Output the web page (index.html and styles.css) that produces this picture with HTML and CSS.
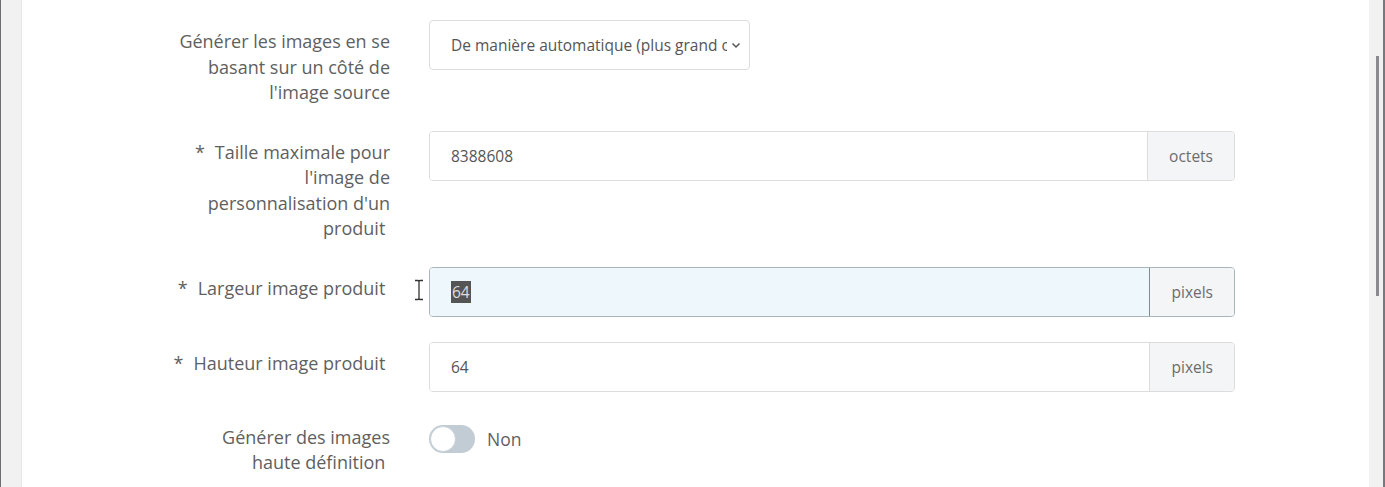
FILE: index.html
```html
<!DOCTYPE html>
<html lang="fr">
<head>
<meta charset="utf-8">
<link rel="stylesheet" href="styles.css">
</head>
<body>
<div class="frame">
  <div class="edge-left"></div>
  <main class="content">
    <div class="row row-1">
      <label class="label">Générer les images en se basant sur un côté de l'image source</label>
      <div class="control">
        <div class="select">
          <span class="select-text">De manière automatique (plus grand côté)</span>
          <svg class="chev" width="10" height="7" viewBox="0 0 10 7"><path d="M1.5 1.5 L5 5 L8.5 1.5" fill="none" stroke="#555" stroke-width="1.5"/></svg>
        </div>
      </div>
    </div>
    <div class="row row-2">
      <label class="label"><span class="req">*</span>Taille maximale pour l'image de personnalisation d'un produit&nbsp;</label>
      <div class="control">
        <div class="group">
          <div class="input">8388608</div>
          <div class="addon">octets</div>
        </div>
      </div>
    </div>
    <div class="row row-3">
      <label class="label label-wide"><span class="req">*</span>Largeur image produit&nbsp;</label>
      <div class="control">
        <svg class="ibeam" width="10" height="22" viewBox="0 0 10 22"><path d="M1 1.5 H4 M6 1.5 H9 M5 2 V20 M1 20.5 H4 M6 20.5 H9" fill="none" stroke="#333" stroke-width="1.3"/><path d="M4 1.5 Q5 1.5 5 2.5 Q5 1.5 6 1.5 M4 20.5 Q5 20.5 5 19.5 Q5 20.5 6 20.5" fill="none" stroke="#333" stroke-width="1.3"/></svg>
        <div class="group focused">
          <div class="input"><span class="sel">64</span></div>
          <div class="addon">pixels</div>
        </div>
      </div>
    </div>
    <div class="row row-4">
      <label class="label label-wide"><span class="req">*</span>Hauteur image produit&nbsp;</label>
      <div class="control">
        <div class="group">
          <div class="input">64</div>
          <div class="addon">pixels</div>
        </div>
      </div>
    </div>
    <div class="row row-5">
      <label class="label">Générer des images haute définition&nbsp;</label>
      <div class="control switch-line">
        <span class="switch"><span class="knob"></span></span>
        <span class="switch-text">Non</span>
      </div>
    </div>
  </main>
  <div class="edge-right"><div class="thumb"></div></div>
</div>
</body>
</html>
```
FILE: styles.css
```css
html, body {
  margin: 0;
  padding: 0;
  height: 100%;
  overflow: hidden;
  background: #fff;
}
body {
  font-family: "Open Sans", "Noto Sans", sans-serif;
  color: #5f5f5f;
}
.frame {
  display: flex;
  height: 487px;
}
.edge-left {
  width: 21px;
  border-left: 1px solid #6e6e73;
  background: #f1f1f2;
  box-shadow: inset -1px 0 0 #e6e7ea;
}
.content {
  flex: 1;
  padding-top: 20px;
  padding-left: 153px;
  display: flex;
  flex-direction: column;
  gap: 25px;
}
.edge-right {
  width: 14px;
  border-right: 2px solid #77777c;
  background: #f1f1f2;
  position: relative;
}
.thumb {
  position: absolute;
  left: 7px;
  top: 56px;
  width: 3px;
  height: 240px;
  background: #8a8a8f;
}
.row {
  display: grid;
  grid-template-columns: 215px 806px;
  column-gap: 39px;
  align-items: start;
}
.label {
  text-align: right;
  font-size: 18px;
  line-height: 25.5px;
  padding-top: 9px;
  color: #5f5f5f;
}
.label-wide {
  margin-left: -12px;
}
.req {
  margin-right: 10px;
}
.control {
  position: relative;
}
.select {
  width: 321px;
  height: 50px;
  box-sizing: border-box;
  border: 1px solid #dcdcdc;
  border-radius: 4px;
  display: flex;
  align-items: center;
  padding: 0 8px 0 21px;
  font-size: 15.5px;
  color: #555;
  background: #fff;
}
.select-text {
  flex: 1;
  white-space: nowrap;
  overflow: hidden;
  margin-right: 4px;
}
.chev {
  flex: none;
}
.group {
  display: flex;
  height: 50px;
  box-sizing: border-box;
  border: 1px solid #dcdcdc;
  border-radius: 4px;
  overflow: hidden;
  font-size: 15.5px;
}
.input {
  flex: 1;
  display: flex;
  align-items: center;
  padding-left: 21px;
  color: #555;
  background: #fff;
}
.addon {
  display: flex;
  align-items: center;
  padding: 0 21px;
  background: #f4f5f7;
  border-left: 1px solid #dcdcdc;
  color: #6c6c6c;
}
.focused {
  border-color: #aab4bb;
}
.focused .input {
  background: #eef7fb;
  border-right: 1px solid #7f8c94;
}
.focused .addon {
  border-left: none;
}
.sel {
  background: #555;
  color: #ddd;
  padding: 2px 1px;
  line-height: 18px;
}
.ibeam {
  position: absolute;
  left: -15px;
  top: 12px;
}
.row-5 .label {
  padding-top: 8px;
}
.switch-line {
  display: flex;
  align-items: center;
  gap: 12px;
  margin-top: 8px;
}
.switch {
  width: 46px;
  height: 28px;
  border-radius: 14px;
  background: #c1ccd4;
  position: relative;
  box-sizing: border-box;
}
.knob {
  position: absolute;
  left: 1px;
  top: 1px;
  width: 26px;
  height: 26px;
  border-radius: 50%;
  background: #fff;
  box-sizing: border-box;
  border: 1px solid #c8d1d8;
}
.switch-text {
  font-size: 17.5px;
  color: #5f5f5f;
}
```
